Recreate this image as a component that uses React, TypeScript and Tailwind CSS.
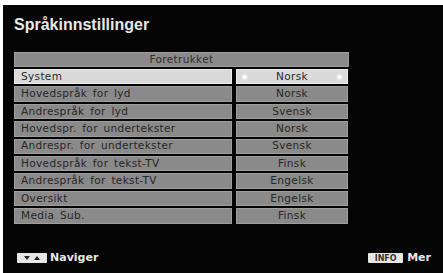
const rows: [string, string][] = [
  ["System", "Norsk"],
  ["Hovedspråk for lyd", "Norsk"],
  ["Andrespråk for lyd", "Svensk"],
  ["Hovedspr. for undertekster", "Norsk"],
  ["Andrespr. for undertekster", "Svensk"],
  ["Hovedspråk for tekst-TV", "Finsk"],
  ["Andrespråk for tekst-TV", "Engelsk"],
  ["Oversikt", "Engelsk"],
  ["Media Sub.", "Finsk"],
];

export default function App() {
  return (
    <div className="w-[443px] h-[273px] bg-white pt-[5px] pl-[3px] overflow-hidden">
      <div
        className="h-full bg-[#050505] flex flex-col"
        style={{ fontFamily: '"DejaVu Sans", sans-serif' }}
      >
        <h1 className="mt-[10px] ml-[11px] text-[16px] leading-[19px] font-bold text-[#e8e8e8] font-['Liberation_Sans',sans-serif]">
          Språkinnstillinger
        </h1>

        <div className="mt-[18px] ml-[11px] w-[335px] flex flex-col gap-[2px] text-[10.5px] tracking-[0.35px] [word-spacing:2px]">
          <div className="h-[15px] bg-[#8a8a8a] border border-[#9e9e9e] flex items-center justify-center text-[#2e2e2e]">
            Foretrukket
          </div>
          {rows.map(([label, value], i) => {
            const sel = i === 0;
            return (
              <div key={label} className="flex gap-[4px] h-[15.4px]">
                <div
                  className={
                    sel
                      ? "w-[218px] bg-[#dadada] border border-[#ececec] flex items-center pl-[6px] text-[#2a2a2a]"
                      : "w-[218px] bg-[#8a8a8a] border border-[#9e9e9e] flex items-center pl-[6px] text-[#262626]"
                  }
                >
                  {label}
                </div>
                <div
                  className={
                    sel
                      ? "relative w-[112px] bg-[#dadada] border border-[#ececec] flex items-center justify-center text-[#2a2a2a]"
                      : "w-[112px] bg-[#8a8a8a] border border-[#9e9e9e] flex items-center justify-center text-[#262626]"
                  }
                >
                  {sel && (
                    <span className="absolute left-[6px] top-1/2 -translate-y-1/2 w-[3px] h-[3px] rounded-full bg-white shadow-[0_0_2px_1px_white]" />
                  )}
                  {value}
                  {sel && (
                    <span className="absolute right-[6px] top-1/2 -translate-y-1/2 w-[3px] h-[3px] rounded-full bg-white shadow-[0_0_2px_1px_white]" />
                  )}
                </div>
              </div>
            );
          })}
        </div>

        <div className="mt-auto mb-[9px] flex items-center justify-between pl-[14px] pr-[12px]">
          <div className="flex items-center gap-[3px]">
            <div className="w-[30px] h-[10px] bg-[#e6e6e6] rounded-[1px] flex items-center justify-center gap-[4px]">
              <span className="w-0 h-0 border-l-[3px] border-r-[3px] border-t-[4px] border-l-transparent border-r-transparent border-t-[#222]" />
              <span className="w-0 h-0 border-l-[3px] border-r-[3px] border-b-[4px] border-l-transparent border-r-transparent border-b-[#222]" />
            </div>
            <span className="text-[11px] leading-[12px] font-bold text-[#e8e8e8]">Naviger</span>
          </div>
          <div className="flex items-center gap-[4px]">
            <div className="w-[35px] h-[10px] bg-[#e6e6e6] rounded-[1px] flex items-center justify-center text-[8px] leading-[9px] font-bold text-[#333]">
              INFO
            </div>
            <span className="text-[11px] leading-[12px] font-bold text-[#e8e8e8]">Mer</span>
          </div>
        </div>
      </div>
    </div>
  );
}
